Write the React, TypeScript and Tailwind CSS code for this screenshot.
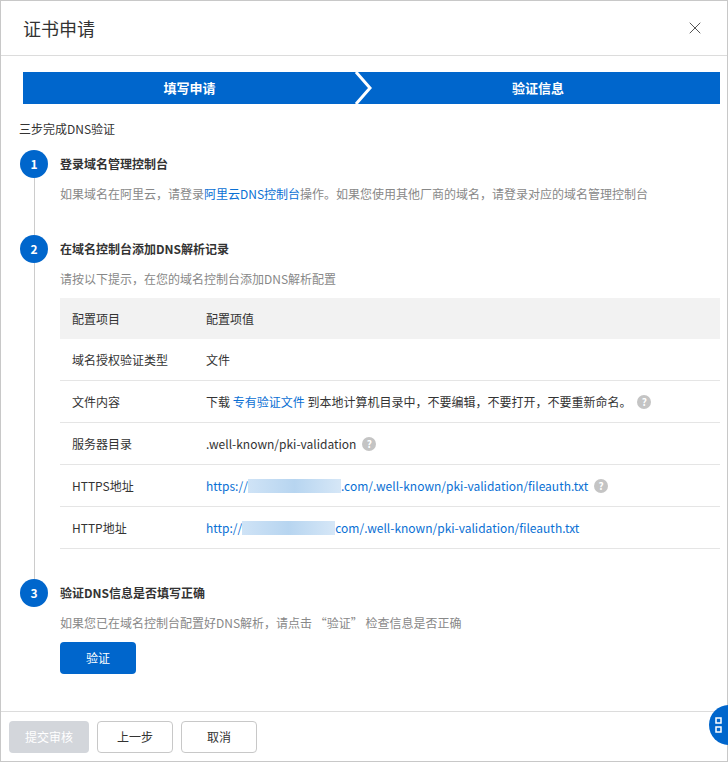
import { X } from "lucide-react"

const font = { fontFamily: '"Noto Sans CJK SC", "Liberation Sans", sans-serif' }

function Help() {
	return (
		<span className="ml-1.5 inline-flex h-[14px] w-[14px] items-center justify-center rounded-full bg-[#c4c4c4] text-[10px] font-bold leading-none text-white">
			?
		</span>
	)
}

function Blur({ w }: { w: string }) {
	return <span className={`inline-block h-[14px] align-middle ${w} bg-gradient-to-r from-[#cfe3f6] via-[#b7d5f0] to-[#d6e7f7]`} />
}

function StepCircle({ n }: { n: number }) {
	return (
		<div className="flex h-7 w-7 shrink-0 items-center justify-center rounded-full bg-[#0066cc] text-[12px] font-bold text-white">
			{n}
		</div>
	)
}

const rows: [string, React.ReactNode][] = [
	["域名授权验证类型", <span>文件</span>],
	[
		"文件内容",
		<span className="flex items-center">
			下载&nbsp;<span className="text-[#0a70d4]">专有验证文件</span>&nbsp;到本地计算机目录中，不要编辑，不要打开，不要重新命名。
			<Help />
		</span>,
	],
	[
		"服务器目录",
		<span className="flex items-center">
			.well-known/pki-validation
			<Help />
		</span>,
	],
	[
		"HTTPS地址",
		<span className="flex items-center text-[#0a70d4]">
			https://
			<Blur w="w-[93px]" />
			.com/.well-known/pki-validation/fileauth.txt
			<Help />
		</span>,
	],
	[
		"HTTP地址",
		<span className="flex items-center text-[#0a70d4]">
			http://
			<Blur w="w-[93px]" />
			com/.well-known/pki-validation/fileauth.txt
		</span>,
	],
]

export default function App() {
	return (
		<div className="relative h-[767px] w-[728px] overflow-hidden bg-white text-[12px] text-[#333]" style={font}>
			<div className="flex h-[762px] flex-col border border-[#c8c8c8]">
				<div className="flex h-[55px] shrink-0 items-center justify-between border-b border-[#dcdcdc] pl-[22px] pr-[22px]">
					<span className="text-[18px] text-[#333]">证书申请</span>
					<X size={20} strokeWidth={1.2} className="text-[#555]" />
				</div>

				<div className="flex-1 pt-4">
					<div className="relative ml-[22px] mr-[7px] flex h-8 bg-[#0066cc] text-[13px] font-bold text-white">
						<div className="flex w-[333px] items-center justify-center">填写申请</div>
						<div className="flex flex-1 items-center justify-center">验证信息</div>
						<svg className="absolute left-[331px] top-0" width="20" height="32" viewBox="0 0 20 32">
							<polyline points="2,0 16,16 2,32" fill="none" stroke="white" strokeWidth="3" />
						</svg>
					</div>

					<div className="ml-[18px] mt-4 text-[12px]">三步完成DNS验证</div>

					<div className="mt-3 pl-[19px] pr-[7px]">
						<div className="flex">
							<div className="flex w-[40px] flex-col items-start">
								<StepCircle n={1} />
								<div className="ml-[14px] w-px flex-1 bg-[#ccc]" />
							</div>
							<div className="flex-1 pb-8">
								<div className="mt-[5px] font-bold">登录域名管理控制台</div>
								<div className="mt-3 text-[#888]">
									如果域名在阿里云，请登录<span className="text-[#0a70d4]">阿里云DNS控制台</span>
									操作。如果您使用其他厂商的域名，请登录对应的域名管理控制台
								</div>
							</div>
						</div>

						<div className="flex">
							<div className="flex w-[40px] flex-col items-start">
								<StepCircle n={2} />
								<div className="ml-[14px] w-px flex-1 bg-[#ccc]" />
							</div>
							<div className="flex-1 pb-[30px]">
								<div className="mt-[5px] font-bold">在域名控制台添加DNS解析记录</div>
								<div className="mt-3 text-[#888]">请按以下提示，在您的域名控制台添加DNS解析配置</div>
								<div className="mt-2.5">
									<div className="flex h-[41px] items-center bg-[#f2f2f2] pl-3">
										<div className="w-[134px]">配置项目</div>
										<div>配置项值</div>
									</div>
									{rows.map(([k, v]) => (
										<div key={k} className="flex h-[42px] items-center border-b border-[#e5e5e5] pl-3">
											<div className="w-[134px]">{k}</div>
											<div>{v}</div>
										</div>
									))}
								</div>
							</div>
						</div>

						<div className="flex">
							<div className="w-[40px]">
								<StepCircle n={3} />
							</div>
							<div className="flex-1">
								<div className="mt-[5px] font-bold">验证DNS信息是否填写正确</div>
								<div className="mt-3 text-[#888]">如果您已在域名控制台配置好DNS解析，请点击 “验证” 检查信息是否正确</div>
								<button className="mt-2.5 h-8 w-[76px] rounded-sm bg-[#0066cc] text-white">验证</button>
							</div>
						</div>
					</div>
				</div>

				<div className="flex h-[50px] shrink-0 items-center gap-2 border-t border-[#dcdcdc] pl-2">
					<button className="h-8 w-[80px] rounded-sm bg-[#d3d6db] text-white">提交审核</button>
					<button className="h-8 w-[76px] rounded-sm border border-[#c8c8c8] bg-white">上一步</button>
					<button className="h-8 w-[76px] rounded-sm border border-[#c8c8c8] bg-white">取消</button>
				</div>
			</div>
			<div className="absolute left-[709px] top-[705px] flex h-10 w-10 items-center justify-center rounded-full bg-[#0066cc]">
				<svg width="16" height="16" viewBox="0 0 16 16" fill="none" stroke="white" strokeWidth="1.5" className="-ml-3">
					<rect x="1" y="1" width="5" height="5" />
					<rect x="1" y="10" width="5" height="5" />
				</svg>
			</div>
		</div>
	)
}
